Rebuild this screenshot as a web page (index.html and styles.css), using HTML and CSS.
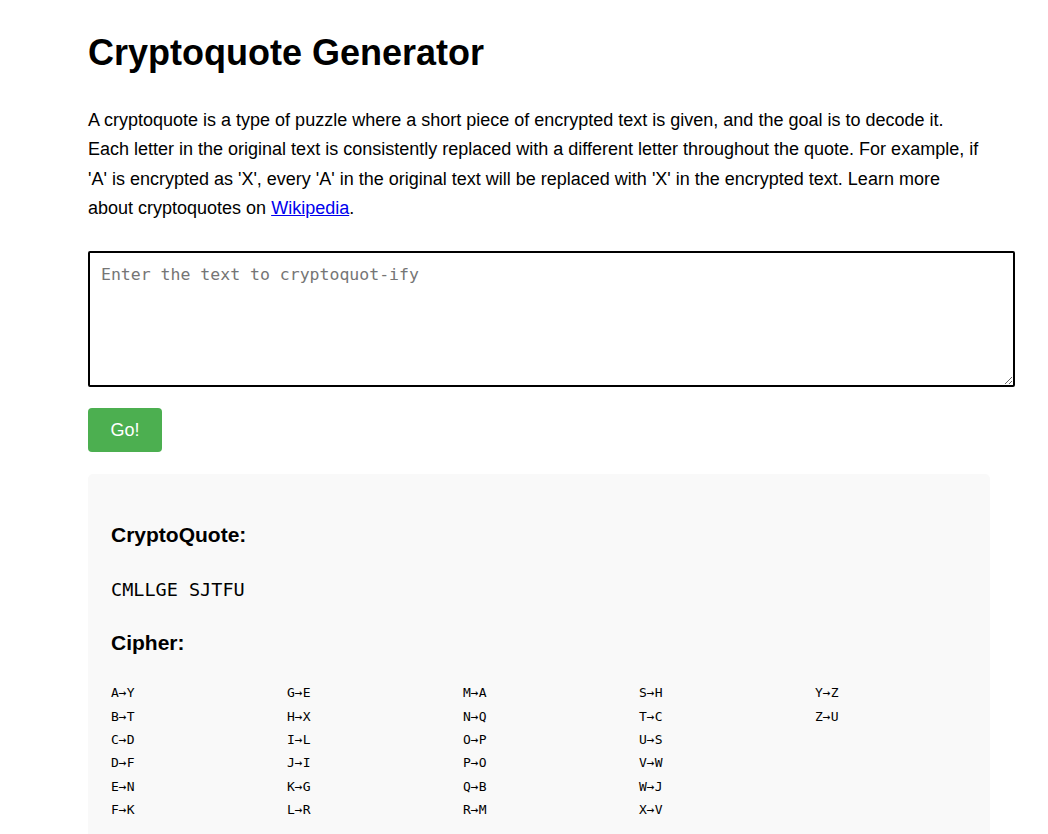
FILE: index.html
```html
<!DOCTYPE html>
<html>
<head>
<meta charset="utf-8">
<title>Cryptoquote Generator</title>
<link rel="stylesheet" href="styles.css">
</head>
<body>
<div class="page">
  <h1 class="title">Cryptoquote Generator</h1>
  <p class="intro">A cryptoquote is a type of puzzle where a short piece of encrypted text is given, and the goal is to decode it. Each letter in the original text is consistently replaced with a different letter throughout the quote. For example, if 'A' is encrypted as 'X', every 'A' in the original text will be replaced with 'X' in the encrypted text. Learn more about cryptoquotes on <a href="#">Wikipedia</a>.</p>
  <textarea class="input" placeholder="Enter the text to cryptoquot-ify"></textarea>
  <button class="go">Go!</button>
  <div class="result">
    <h3 class="label">CryptoQuote:</h3>
    <div class="quote">CMLLGE SJTFU</div>
    <h3 class="label">Cipher:</h3>
    <div class="cipher">
      <div>A→Y</div><div>B→T</div><div>C→D</div><div>D→F</div><div>E→N</div><div>F→K</div>
      <div>G→E</div><div>H→X</div><div>I→L</div><div>J→I</div><div>K→G</div><div>L→R</div>
      <div>M→A</div><div>N→Q</div><div>O→P</div><div>P→O</div><div>Q→B</div><div>R→M</div>
      <div>S→H</div><div>T→C</div><div>U→S</div><div>V→W</div><div>W→J</div><div>X→V</div>
      <div>Y→Z</div><div>Z→U</div>
    </div>
  </div>
</div>
</body>
</html>
```

FILE: styles.css
```css
html, body {
  margin: 0;
  padding: 0;
  background: #fff;
}
body {
  font-family: "Liberation Sans", Arial, sans-serif;
  color: #000;
}
.page {
  width: 902px;
  padding: 24px 0 0 88px;
}
.title {
  font-size: 36px;
  font-weight: bold;
  margin: 8px 0 0;
  line-height: 41px;
}
.intro {
  max-width: 895px;
  font-size: 18px;
  line-height: 29.3px;
  margin: 33px 0 28px;
}
.intro a {
  color: #0000ee;
}
.input {
  display: block;
  box-sizing: border-box;
  width: 927px;
  height: 136px;
  margin: 0;
  padding: 12px 11px 10px;
  border: 2px solid #000;
  border-radius: 2px;
  font-family: "DejaVu Sans Mono", monospace;
  font-size: 16.5px;
  resize: vertical;
}
.input::placeholder {
  color: #757575;
}
.go {
  display: block;
  margin: 21px 0 22px;
  width: 74px;
  height: 44px;
  background: #4caf50;
  color: #fff;
  border: none;
  border-radius: 4px;
  font-family: "Liberation Sans", Arial, sans-serif;
  font-size: 18px;
  padding: 0;
}
.result {
  background: #f9f9f9;
  border-radius: 5px;
  padding: 29px 23px 20px;
}
.label {
  font-size: 21px;
  font-weight: bold;
  margin: 20px 0;
  line-height: 24px;
}
.quote {
  font-family: "DejaVu Sans Mono", monospace;
  font-size: 18.5px;
  margin: 32px 0 31px;
}
.cipher {
  display: grid;
  grid-template-rows: repeat(6, 23.4px);
  grid-auto-flow: column;
  grid-auto-columns: 176px;
  margin-top: 30px;
  font-family: "DejaVu Sans Mono", monospace;
  font-size: 13px;
}
```
